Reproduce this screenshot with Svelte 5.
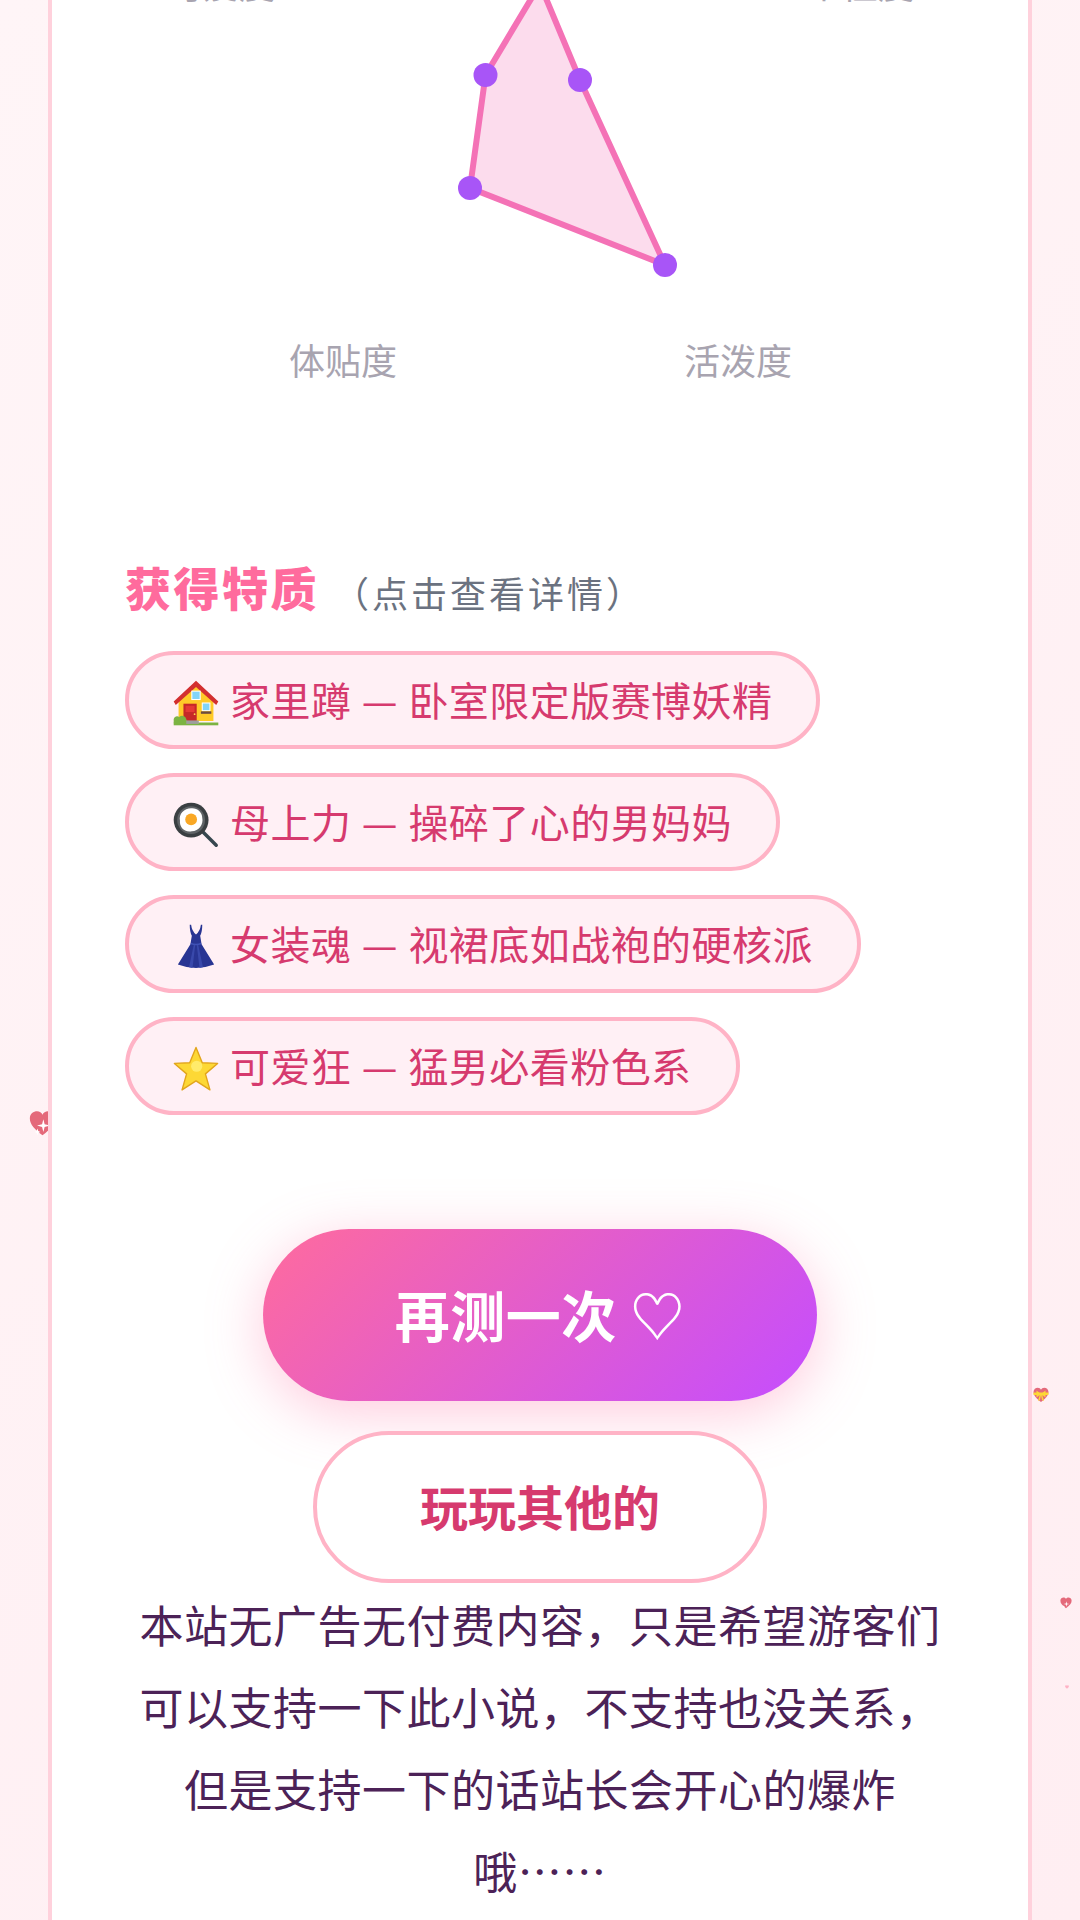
<script>
  const traits = [
    { icon: 'house', name: '家里蹲', desc: '卧室限定版赛博妖精' },
    { icon: 'pan', name: '母上力', desc: '操碎了心的男妈妈' },
    { icon: 'dress', name: '女装魂', desc: '视裙底如战袍的硬核派' },
    { icon: 'star', name: '可爱狂', desc: '猛男必看粉色系' },
  ];

  const floaters = [
    { kind: 'sparkle', x: 29, y: 1110, size: 27 },
    { kind: 'gift', x: 1033, y: 1387, size: 16 },
    { kind: 'sparkle', x: 1060, y: 1597, size: 12 },
    { kind: 'faint', x: 1065, y: 1685, size: 4 },
  ];

  const heart = 'M32 60 C14 46 2 34 2 20 C2 9 11 3 19 3 C25 3 30 6 32 11 C34 6 39 3 45 3 C53 3 62 9 62 20 C62 34 50 46 32 60Z';
  const points = '485.5,75 540,-16 580,80 665,265 470,188';
</script>

{#snippet icon(name)}
  <svg class="trait-icon" viewBox="-1 -1 66 66" aria-hidden="true">
    {#if name === 'house'}
      <polygon points="32,6 57,28 57,58 7,58 7,28" fill="#ffca28" />
      <polygon points="32,0 64,30 61,35 32,9 3,35 0,30" fill="#d32f2f" />
      <rect x="14" y="33" width="19" height="26" fill="#c62828" />
      <rect x="17" y="36" width="13" height="9" fill="#e53935" />
      <circle cx="30" cy="48" r="1.3" fill="#ffd54f" />
      <rect x="26" y="15" width="12" height="12" fill="#81d4fa" stroke="#fff" stroke-width="1.5" />
      <rect x="41" y="32" width="11" height="11" fill="#81d4fa" stroke="#fff" stroke-width="1.5" />
      <rect x="39" y="44" width="15" height="3.5" fill="#6d4c41" />
      <rect x="0" y="60" width="64" height="4" fill="#7cb342" />
      <path d="M0 61 V55 a5 5 0 0 1 8 -3 a6 6 0 0 1 10 3 l2 6Z" fill="#7cb342" />
      <rect x="18" y="57" width="18" height="5" fill="#9e9e9e" />
    {:else if name === 'pan'}
      <line x1="42" y1="42" x2="61" y2="61" stroke="#37474f" stroke-width="5" stroke-linecap="round" />
      <circle cx="25" cy="25" r="25" fill="#3a3f42" />
      <circle cx="25" cy="25" r="20" fill="#5f6366" />
      <path d="M25 8 C33 7 41 13 41 22 C43 31 36 41 26 41 C15 43 8 35 9 26 C7 16 15 8 25 8Z" fill="#fff" />
      <circle cx="25" cy="24" r="8.5" fill="#f9a825" />
    {:else if name === 'dress'}
      <path d="M23 0 Q23 10 26 16 L24 28 L6 57 Q32 67 58 57 L40 28 L38 16 Q41 10 41 0 L39 0 Q38 9 32 14 Q26 9 25 0Z" fill="#283593" />
      <path d="M29 28 L22 61 L27 62 L31 28Z M35 28 L42 61 L37 62 L33 28Z" fill="#3949ab" />
      <path d="M24 28 Q32 31 40 28 L39 26 Q32 29 25 26Z" fill="#3f51b5" />
    {:else}
      <polygon points="32,1 41,23 63,24 45.5,39 52,62 32,49 12,62 18.5,39 1,24 23,23" fill="#fdd835" stroke="#e2a51c" stroke-width="2" stroke-linejoin="round" />
      <circle cx="33" cy="28" r="8" fill="#ffeb6b" />
    {/if}
  </svg>
{/snippet}

<div class="page">
  {#each floaters as f}
    <svg class="floater" viewBox="0 0 64 64" width={f.size} height={f.size} style="left: {f.x}px; top: {f.y}px">
      <path d={heart} fill={f.kind === 'faint' ? '#ffb3c6' : '#e4697a'} />
      {#if f.kind === 'sparkle'}
        <path d="M34 22 L37 34 L50 37 L37 40 L34 52 L31 40 L19 37 L31 34Z M20 44 L22 50 L27 52 L22 54 L20 60 L18 54 L13 52 L18 50Z" fill="#fff" />
      {:else if f.kind === 'gift'}
        <path d="M2 22 H62 V32 H2Z" fill="#fdd835" />
        <path d="M32 28 L14 14 V42Z M32 28 L50 14 V42Z M28 28 L20 56 L28 52 L32 32 L36 52 L44 56 L36 28Z" fill="#fdd835" />
      {/if}
    </svg>
  {/each}

  <main class="card">
    <section class="radar">
      <svg class="radar-svg" width="976" height="460" viewBox="52 0 976 460">
        <polygon points={points} fill="rgba(244, 114, 182, 0.25)" stroke="#f472b6" stroke-width="6" />
        <circle cx="485.5" cy="75" r="12" fill="#a855f7" />
        <circle cx="580" cy="80" r="12" fill="#a855f7" />
        <circle cx="470" cy="188" r="12" fill="#a855f7" />
        <circle cx="665" cy="265" r="12" fill="#a855f7" />
        <text x="343" y="375" text-anchor="middle">体贴度</text>
        <text x="738" y="375" text-anchor="middle">活泼度</text>
        <text x="221" y="-1" text-anchor="middle">可爱度</text>
        <text x="860" y="-1" text-anchor="middle">个性度</text>
      </svg>
    </section>

    <section class="traits">
      <h2 class="traits-title">获得特质 <span class="traits-hint">（点击查看详情）</span></h2>
      <ul class="trait-list">
        {#each traits as t}
          <li class="trait">
            {@render icon(t.icon)}
            <span class="trait-text">{t.name} — {t.desc}</span>
          </li>
        {/each}
      </ul>
    </section>

    <div class="actions">
      <button class="btn-primary">再测一次 ♡</button>
      <button class="btn-secondary">玩玩其他的</button>
    </div>

    <p class="note">本站无广告无付费内容，只是希望游客们可以支持一下此小说，不支持也没关系，但是支持一下的话站长会开心的爆炸哦……</p>
  </main>
</div>

<style>
  :global(body) {
    margin: 0;
    background: #fff0f3;
    font-family: "Noto Sans CJK SC", "Noto Sans", sans-serif;
  }
  .page {
    position: relative;
    height: 1920px;
    overflow: hidden;
    padding: 0 48px;
    box-sizing: border-box;
    background: linear-gradient(135deg, #fff5f7, #ffeef2);
  }
  .floater {
    position: absolute;
  }
  .card {
    position: relative;
    height: 1920px;
    box-sizing: border-box;
    background: #fff;
    border-left: 4px solid #ffd1dc;
    border-right: 4px solid #ffd1dc;
    padding: 0 73px;
  }
  .radar {
    margin: 0 -73px;
    height: 550px;
  }
  .radar-svg {
    display: block;
    overflow: visible;
  }
  .radar-svg text {
    font-size: 36px;
    fill: #a8a4b0;
  }
  .traits-title {
    margin: 0 0 23px;
    font-size: 46px;
    font-weight: 900;
    letter-spacing: 2.5px;
    line-height: 72px;
    color: #ff6b9d;
  }
  .traits-hint {
    margin-left: 1px;
    font-size: 36px;
    font-weight: 400;
    letter-spacing: 3px;
    vertical-align: -2px;
    color: #6b7280;
  }
  .trait-list {
    list-style: none;
    margin: 0;
    padding: 0;
    display: flex;
    flex-direction: column;
    align-items: flex-start;
    gap: 24px;
  }
  .trait {
    box-sizing: border-box;
    height: 98px;
    padding: 0 44px;
    display: flex;
    align-items: center;
    gap: 11px;
    font-size: 40px;
    letter-spacing: 0.45px;
    word-spacing: 1px;
    color: #d63a6e;
    background: #fff0f5;
    border: 4px solid #ffb3c6;
    border-radius: 49px;
    white-space: nowrap;
  }
  .trait-icon {
    width: 46px;
    height: 46px;
    flex-shrink: 0;
    margin-top: 6px;
  }
  .trait-text {
    margin-bottom: 2px;
  }
  .actions {
    margin-top: 114px;
    display: flex;
    flex-direction: column;
    align-items: center;
    gap: 30px;
  }
  .actions button {
    font-family: inherit;
    font-weight: 700;
    box-sizing: border-box;
    cursor: pointer;
  }
  .btn-primary {
    width: 554px;
    height: 172px;
    padding: 0 0 4px;
    border: none;
    border-radius: 86px;
    font-size: 55px;
    letter-spacing: 0.5px;
    color: #fff;
    background: linear-gradient(135deg, #ff6b9d, #c44dff);
    box-shadow: 0 12px 56px rgba(255, 107, 157, 0.35);
  }
  .btn-secondary {
    width: 454px;
    height: 152px;
    padding: 0 0 5px;
    border: 4px solid #ffb3c6;
    border-radius: 76px;
    font-size: 48px;
    color: #d63a6e;
    background: #fff;
  }
  .note {
    margin: 0;
    text-align: center;
    font-size: 44px;
    letter-spacing: 0.5px;
    line-height: 82px;
    color: #4c2257;
  }
</style>
